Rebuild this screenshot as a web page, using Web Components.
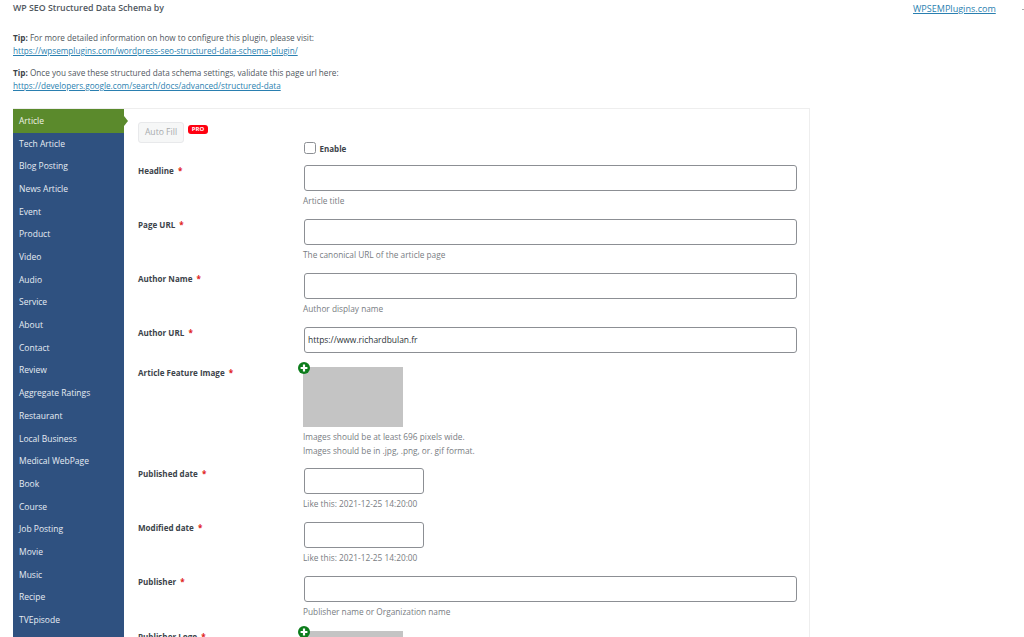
<!DOCTYPE html>
<html>
<head>
<meta charset="utf-8">
<style>
  html, body { margin: 0; height: 637px; overflow: hidden; background: #fff; }
  body { font-family: "Open Sans", sans-serif; font-size: 8.2px; color: #444; }
</style>
</head>
<body>
<schema-page></schema-page>

<script>
class SchemaTabs extends HTMLElement {
  constructor() {
    super();
    this.attachShadow({ mode: 'open' });
  }

  connectedCallback() {
    const tabs = (this.getAttribute('tabs') || '').split(',').map(t => t.trim());
    this.shadowRoot.innerHTML = `
      <style>
        :host { display: block; width: 111px; flex: none; background: #2f5180; font-size: 8.5px; }
        ul { list-style: none; margin: 0; padding: 0; }
        li {
          position: relative;
          height: 22.7px;
          line-height: 22.7px;
          padding-left: 6px;
          color: #e6ecf3;
          white-space: nowrap;
        }
        li.active { height: 23.6px; line-height: 23.6px; background: #5b8a2c; color: #eef3e6; }
        li.active::after {
          content: '';
          position: absolute;
          left: 100%;
          top: 7px;
          border-left: 4px solid #5b8a2c;
          border-top: 5px solid transparent;
          border-bottom: 5px solid transparent;
        }
      </style>
      <ul>${tabs.map((t, i) => `<li class="${i === 0 ? 'active' : ''}">${t}</li>`).join('')}</ul>
    `;
  }
}

class FormRow extends HTMLElement {
  constructor() {
    super();
    this.attachShadow({ mode: 'open' });
  }

  connectedCallback() {
    const label = this.getAttribute('label') || '';
    this.shadowRoot.innerHTML = `
      <style>
        :host { display: grid; grid-template-columns: 165px 494px; }
        .label { font-size: 8.05px; font-weight: 700; color: #3c434a; line-height: 12px; }
        .label i { font-style: normal; color: #e02020; margin-left: 2px; }
      </style>
      <div class="label">${label}${label ? ' <i>*</i>' : ''}</div>
      <div><slot></slot></div>
    `;
  }
}

class TextField extends HTMLElement {
  constructor() {
    super();
    this.attachShadow({ mode: 'open' });
  }

  connectedCallback() {
    const width = this.getAttribute('width') || '493px';
    const value = this.getAttribute('value') || '';
    const help = this.getAttribute('help') || '';
    this.shadowRoot.innerHTML = `
      <style>
        :host { display: block; margin-left: 1px; }
        .box {
          box-sizing: border-box;
          width: ${width};
          height: 26px;
          border: 1px solid #8c8f94;
          border-radius: 3px;
          background: #fff;
          padding: 0 3px;
          font-size: 8.45px;
          line-height: 24px;
          color: #2c3338;
        }
        .help { margin: 2.5px 0 0 -1px; font-size: 8.3px; line-height: 13px; color: #787c82; white-space: nowrap; }
      </style>
      <div class="box">${value}</div>
      ${help ? `<div class="help">${help}</div>` : ''}
    `;
  }
}

class ImagePicker extends HTMLElement {
  constructor() {
    super();
    this.attachShadow({ mode: 'open' });
  }

  connectedCallback() {
    this.shadowRoot.innerHTML = `
      <style>
        :host { display: block; position: relative; }
        .thumb { width: 100px; height: 60px; background: #c4c4c4; }
        svg { position: absolute; left: -5px; top: -5px; }
        .help { margin-top: 3px; font-size: 8.3px; color: #787c82; line-height: 13.5px; white-space: nowrap; }
      </style>
      <div class="thumb"></div>
      <svg width="12" height="12" viewBox="0 0 12 12">
        <circle cx="6" cy="6" r="6" fill="#0d7d1c"/>
        <path d="M6 2.6v6.8M2.6 6h6.8" stroke="#fff" stroke-width="2.2"/>
      </svg>
      <div class="help"><slot></slot></div>
    `;
  }
}

class SchemaPage extends HTMLElement {
  constructor() {
    super();
    this.attachShadow({ mode: 'open' });
  }

  connectedCallback() {
    this.shadowRoot.innerHTML = `
      <style>
        :host { display: block; height: 637px; overflow: hidden; padding: 0 0 0 13px; box-sizing: border-box; position: relative; }
        a { color: #2a7fb0; text-decoration: underline; }
        b { color: #3c434a; }
        .top { display: flex; height: 31px; padding-top: 2px; box-sizing: border-box; line-height: 13px; }
        .title { font-size: 8.8px; font-weight: 600; width: 900px; color: #50575e; }
        .site { font-size: 9.05px; }
        p { margin: 0 0 9px; line-height: 13px; color: #50575e; }
        .panel {
          display: flex;
          width: 797px;
          height: 600px;
          margin-top: 16px;
          box-sizing: border-box;
          border: 1px solid #eee;
          border-left: 0;
        }
        .main { flex: 1; padding: 13px 0 0 14px; min-width: 0; }
        .auto { display: flex; align-items: flex-start; height: 20px; }
        .btn {
          box-sizing: border-box;
          width: 46px; height: 21px;
          border: 1px solid #e8e9eb;
          border-radius: 3px;
          background: #f6f7f7;
          color: #a7aaad;
          font-size: 8.6px;
          line-height: 19px;
          text-align: center;
        }
        .pro {
          margin: 3px 0 0 4px;
          width: 20px; height: 9px;
          border-radius: 3px;
          background: #ff0010;
          color: #fff;
          font-size: 6px;
          font-weight: 700;
          line-height: 9px;
          text-align: center;
        }
        .enable { display: flex; align-items: center; gap: 3.5px; height: 12px; }
        .check { width: 10px; height: 10px; border: 1px solid #8c8f94; border-radius: 2.5px; margin-left: 1px; flex: none; }
        .enable span { font-size: 8px; font-weight: 700; color: #3c434a; }
        form-row { margin-bottom: 12.5px; }
        .tight { margin-bottom: 11px; }
        .wide { margin-bottom: 14px; }
        .pub { margin-bottom: 13.5px; }
        .dot { position: absolute; right: 0; top: 9px; width: 2px; height: 1px; background: #aaa; }
      </style>
      <div class="top">
        <div class="title">WP SEO Structured Data Schema by</div>
        <a class="site" href="#">WPSEMPlugins.com</a>
      </div>
      <div class="dot"></div>
      <p><b>Tip:</b> For more detailed information on how to configure this plugin, please visit:<br>
        <a href="#">https://wpsemplugins.com/wordpress-seo-structured-data-schema-plugin/</a></p>
      <p><b>Tip:</b> Once you save these structured data schema settings, validate this page url here:<br>
        <a href="#">https://developers.google.com/search/docs/advanced/structured-data</a></p>
      <div class="panel">
        <schema-tabs tabs="Article, Tech Article, Blog Posting, News Article, Event, Product, Video, Audio, Service, About, Contact, Review, Aggregate Ratings, Restaurant, Local Business, Medical WebPage, Book, Course, Job Posting, Movie, Music, Recipe, TVEpisode"></schema-tabs>
        <div class="main">
          <div class="auto"><div class="btn">Auto Fill</div><div class="pro">PRO</div></div>
          <form-row class="tight"><div class="enable"><div class="check"></div><span>Enable</span></div></form-row>
          <form-row label="Headline"><text-field help="Article title"></text-field></form-row>
          <form-row label="Page URL"><text-field help="The canonical URL of the article page"></text-field></form-row>
          <form-row label="Author Name"><text-field help="Author display name"></text-field></form-row>
          <form-row class="wide" label="Author URL"><text-field value="https://www.richardbulan.fr"></text-field></form-row>
          <form-row class="tight" label="Article Feature Image"><image-picker>Images should be at least 696 pixels wide.<br>Images should be in .jpg, .png, or. gif format.</image-picker></form-row>
          <form-row label="Published date"><text-field width="120px" help="Like this: 2021-12-25 14:20:00"></text-field></form-row>
          <form-row label="Modified date"><text-field width="120px" help="Like this: 2021-12-25 14:20:00"></text-field></form-row>
          <form-row class="pub" label="Publisher"><text-field help="Publisher name or Organization name"></text-field></form-row>
          <form-row label="Publisher Logo"><image-picker></image-picker></form-row>
        </div>
      </div>
    `;
  }
}

customElements.define('schema-tabs', SchemaTabs);
customElements.define('form-row', FormRow);
customElements.define('text-field', TextField);
customElements.define('image-picker', ImagePicker);
customElements.define('schema-page', SchemaPage);
</script>
</body>
</html>
